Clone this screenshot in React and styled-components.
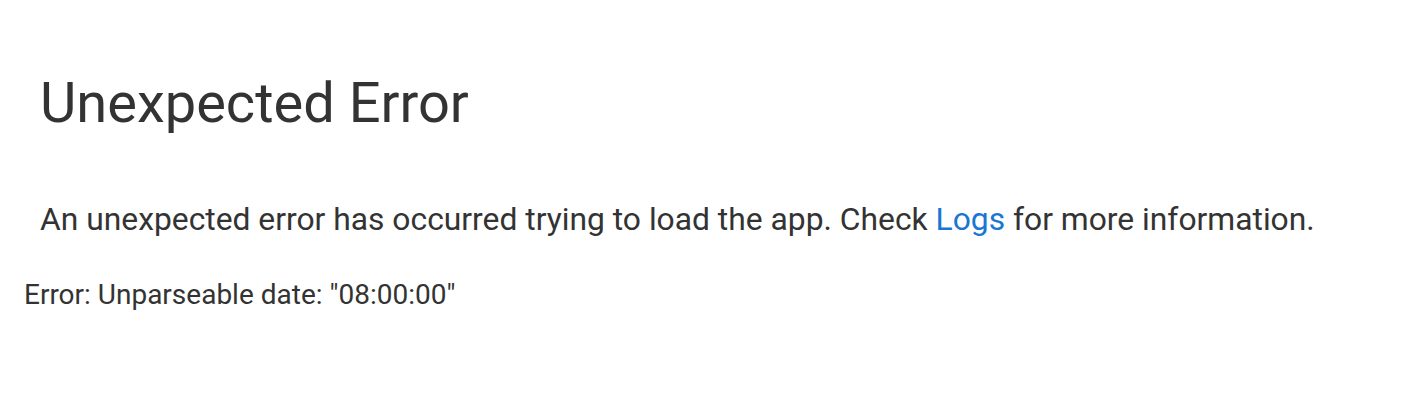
import styled, { createGlobalStyle } from "styled-components";

const GlobalStyle = createGlobalStyle`
    body {
        margin: 0;
        background: #ffffff;
        font-family: Roboto, "Liberation Sans", sans-serif;
        color: #333333;
    }
`

const App = () => {
    return (
        <Page>
            <GlobalStyle />
            <Panel>
                <Title>Unexpected Error</Title>
                <Message>
                    An unexpected error has occurred trying to load the app. Check <LogsLink href="#">Logs</LogsLink> for more information.
                </Message>
            </Panel>
            <Detail>Error: Unparseable date: "08:00:00"</Detail>
        </Page>
    )
}

const Page = styled.div`
    padding: 40px 24px;
`

const Panel = styled.div`
    padding: 0 16px;
`

const Title = styled.h1`
    font-size: 56px;
    font-weight: 400;
    line-height: 1.2;
    margin: 30px 0 58px;
`

const Message = styled.p`
    font-size: 31.8px;
    font-weight: 400;
    line-height: 48px;
    margin: 0 0 32px;
`

const LogsLink = styled.a`
    color: #1976d2;
    text-decoration: none;
`

const Detail = styled.div`
    font-size: 28px;
    line-height: 1.4;
`

export default App;
